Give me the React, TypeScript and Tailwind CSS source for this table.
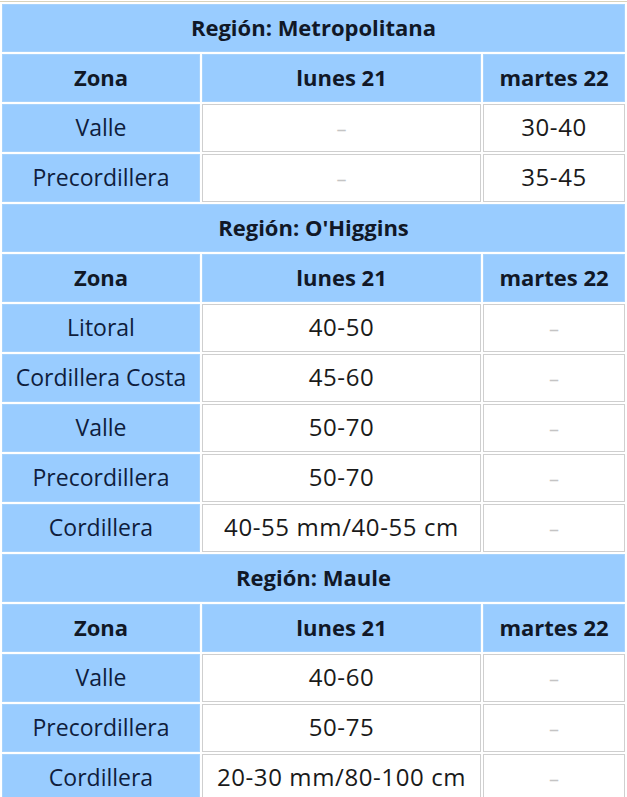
const regions = [
  {
    name: "Metropolitana",
    rows: [
      ["Valle", "-", "30-40"],
      ["Precordillera", "-", "35-45"],
    ],
  },
  {
    name: "O'Higgins",
    rows: [
      ["Litoral", "40-50", "-"],
      ["Cordillera Costa", "45-60", "-"],
      ["Valle", "50-70", "-"],
      ["Precordillera", "50-70", "-"],
      ["Cordillera", "40-55 mm/40-55 cm", "-"],
    ],
  },
  {
    name: "Maule",
    rows: [
      ["Valle", "40-60", "-"],
      ["Precordillera", "50-75", "-"],
      ["Cordillera", "20-30 mm/80-100 cm", "-"],
    ],
  },
];

function Value({ v }: { v: string }) {
  if (v === "-") return <span className="text-[20px] text-[#c4c4c4]">–</span>;
  return <span className="tracking-[0.6px]">{v}</span>;
}

export default function App() {
  return (
    <div className="bg-white w-[627px] pt-px" style={{ fontFamily: '"Open Sans", "Noto Sans", sans-serif' }}>
      <div className="h-px bg-[#d9d3bd]" />
      <table className="w-[627px] table-fixed border-separate border-spacing-[2px] text-center">
        <colgroup>
          <col className="w-[198px]" />
          <col className="w-[279px]" />
          <col />
        </colgroup>
        <tbody>
          {regions.map((r) => (
            <RegionBlock key={r.name} name={r.name} rows={r.rows} />
          ))}
        </tbody>
      </table>
    </div>
  );
}

function RegionBlock({ name, rows }: { name: string; rows: string[][] }) {
  const head = "h-[48px] p-0 pb-[2px] bg-[#99ccff] border border-[#a8d3fc] font-bold text-[22px] text-[#111827]";
  const cell = "h-[48px] p-0 pb-[2px] bg-white border border-[#cfcfcf] text-[24px] text-[#1a1a1a]";
  return (
    <>
      <tr>
        <td colSpan={3} className={head}>
          Región: {name}
        </td>
      </tr>
      <tr>
        <td className={head}>Zona</td>
        <td className={head}>lunes 21</td>
        <td className={head}>martes 22</td>
      </tr>
      {rows.map((row, i) => (
        <tr key={i}>
          <td className="h-[48px] p-0 pb-[2px] bg-[#99ccff] border border-[#a8d3fc] text-[23px] text-[#0f1d3d]">
            {row[0]}
          </td>
          <td className={cell}>
            <Value v={row[1]} />
          </td>
          <td className={cell}>
            <Value v={row[2]} />
          </td>
        </tr>
      ))}
    </>
  );
}
